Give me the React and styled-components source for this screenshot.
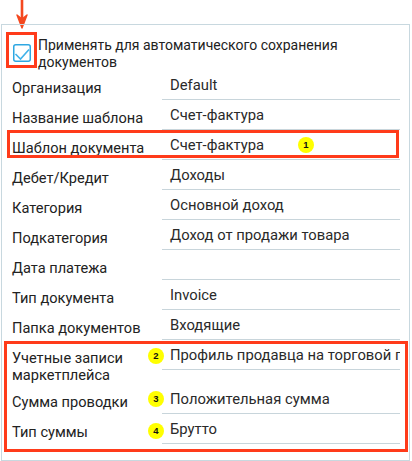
import React from "react";
import styled, { createGlobalStyle } from "styled-components";

const Global = createGlobalStyle`
  html, body { margin: 0; padding: 0; background: #fff; }
  body { font-family: Roboto, "Noto Sans", Arial, sans-serif; }
  * { box-sizing: border-box; }
`;

const RED = "#ff3b1a";

const Page = styled.div`
  position: relative;
  width: 412px;
  height: 461px;
  padding-top: 24px;
  overflow: hidden;
`;

const Arrow = styled.svg`
  position: absolute;
  left: 14px;
  top: 0;
`;

const Panel = styled.div`
  margin-left: 1px;
  width: 409px;
  height: 437px;
  border: 1px solid #c8d8df;
  padding: 11px 9px 0 10px;
  position: relative;
`;

const CheckRow = styled.div`
  display: flex;
  align-items: flex-start;
  gap: 7px;
  padding-left: 1px;
  position: relative;
`;

const CheckFrame = styled.div`
  position: absolute;
  left: -6px;
  top: -4px;
  width: 31px;
  height: 36px;
  border: 3px solid ${RED};
`;

const CheckBox = styled.svg`
  flex: none;
  margin-top: 8px;
`;

const CheckLabel = styled.div`
  font-size: 14px;
  line-height: 16.5px;
  color: #222;
  padding-top: 1px;
`;

const Rows = styled.div`
  display: flex;
  flex-direction: column;
`;

const Row = styled.div`
  display: grid;
  grid-template-columns: 150px 1fr;
  position: relative;
`;

const Label = styled.div`
  font-size: 14.6px;
  line-height: 17px;
  color: #222;
  padding-top: 10px;
  min-height: 30px;
`;

const Value = styled.div`
  height: 30px;
  border-bottom: 1px solid #c8d5db;
  padding: 7px 0 0 8px;
  font-size: 14.8px;
  line-height: 17px;
  color: #2a2a2a;
  white-space: nowrap;
  overflow: hidden;
`;

const Frame = styled.div`
  position: absolute;
  border: 3px solid ${RED};
  pointer-events: none;
  left: ${(p) => p.$l}px;
  right: ${(p) => p.$r}px;
  top: ${(p) => p.$t}px;
  bottom: ${(p) => p.$b}px;
`;

const Group = styled.div`
  position: relative;
  display: flex;
  flex-direction: column;
`;

const Badge = styled.span`
  position: absolute;
  left: ${(p) => p.$x}px;
  top: ${(p) => p.$y}px;
  width: 16px;
  height: 16px;
  border-radius: 50%;
  background: #ffff00;
  color: #111;
  font-family: Arial, "Liberation Sans", sans-serif;
  font-weight: bold;
  font-size: 9.5px;
  line-height: 16px;
  text-align: center;
`;

const Field = ({ label, value, children }) => (
  <Row>
    <Label>{label}</Label>
    <Value>{value}</Value>
    {children}
  </Row>
);

export default function App() {
  return (
    <>
      <Global />
      <Page>
        <Arrow width="16" height="30" viewBox="0 0 16 30">
          <line x1="8" y1="0" x2="8" y2="22" stroke="#f4481f" strokeWidth="2.6" />
          <path d="M3 15 L8 28 L13 15 L8 19 Z" fill="#f4481f" stroke="#f4481f" strokeWidth="1.4" strokeLinejoin="round" />
        </Arrow>
        <Panel>
          <CheckRow>
            <CheckFrame />
            <CheckBox width="18" height="18" viewBox="0 0 18 18">
              <rect x="0.75" y="0.75" width="16.5" height="16.5" rx="2" fill="#fff" stroke="#2ea7e2" strokeWidth="1.5" />
              <polyline points="2.5,10 7.5,15 16,5.5" fill="none" stroke="#3fb2ea" strokeWidth="1.6" />
            </CheckBox>
            <CheckLabel>
              Применять для автоматического сохранения
              <br />
              документов
            </CheckLabel>
          </CheckRow>
          <Rows>
            <Field label="Организация" value="Default" />
            <Field label="Название шаблона" value="Счет-фактура" />
            <Field label="Шаблон документа" value="Счет-фактура">
              <Frame $l={-5} $r={1} $t={0} $b={2} />
              <Badge $x={286} $y={7}>1</Badge>
            </Field>
            <Field label="Дебет/Кредит" value="Доходы" />
            <Field label="Категория" value="Основной доход" />
            <Field label="Подкатегория" value="Доход от продажи товара" />
            <Field label="Дата платежа" value="" />
            <Field label="Тип документа" value="Invoice" />
            <Field label="Папка документов" value="Входящие" />
            <Group>
              <Frame $l={-8} $r={-8} $t={1} $b={-8} />
              <Field label={<>Учетные записи<br />маркетплейса</>} value="Профиль продавца на торговой п">
                <Badge $x={136} $y={8}>2</Badge>
              </Field>
              <Field label="Сумма проводки" value="Положительная сумма">
                <Badge $x={136} $y={7}>3</Badge>
              </Field>
              <Field label="Тип суммы" value="Брутто">
                <Badge $x={136} $y={9}>4</Badge>
              </Field>
            </Group>
          </Rows>
        </Panel>
      </Page>
    </>
  );
}
